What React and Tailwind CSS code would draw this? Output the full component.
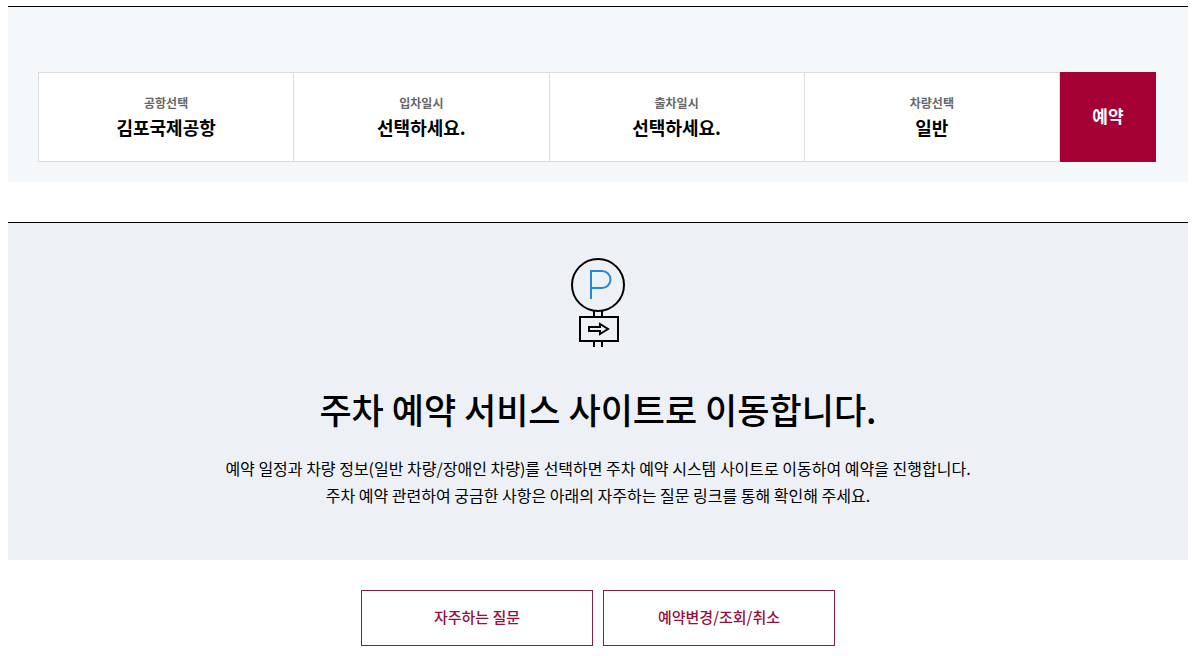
const fields = [
  { label: '공항선택', value: '김포국제공항' },
  { label: '입차일시', value: '선택하세요.' },
  { label: '출차일시', value: '선택하세요.' },
  { label: '차량선택', value: '일반' },
];

function ParkingSign() {
  return (
    <svg className="h-[92px] w-14" viewBox="0 0 56 92" fill="none" strokeWidth="2" aria-hidden="true">
      <circle cx="28" cy="29" r="26" stroke="#000" />
      <path d="M21 43V15h11a8.5 8.5 0 0 1 0 17H21" stroke="#2389d6" />
      <path d="M24 55v6M32 55v6M24 85v6M32 85v6" stroke="#000" />
      <rect x="10" y="61" width="38" height="24" stroke="#000" />
      <path d="M19 71h11v-3l8 5-8 5v-3H19z" stroke="#000" />
    </svg>
  );
}

export default function App() {
  return (
    <main className="pt-1.5 pr-1.5 pl-2 font-['Noto_Sans_CJK_KR','Noto_Sans',sans-serif] text-black">
      <section className="border-t border-black bg-[#f4f8fb] pt-[65px] pr-8 pb-5 pl-[30px]">
        <form className="flex h-[90px]" onSubmit={(e) => e.preventDefault()}>
          <div className="grid flex-1 grid-cols-4 border-l border-[#ddd]">
            {fields.map((f) => (
              <button key={f.label} type="button" className="flex flex-col items-center justify-center border-y border-r border-[#ddd] bg-white">
                <span className="text-xs leading-5 font-bold text-[#666]">{f.label}</span>
                <strong className="text-lg leading-7 font-bold">{f.value}</strong>
              </button>
            ))}
          </div>
          <button type="submit" className="w-24 bg-[#a50034] pb-0.5 text-[17px] font-bold text-white">예약</button>
        </form>
      </section>
      <section className="mt-10 flex flex-col items-center border-t border-black bg-[#edf1f6] pt-[33px] pb-[51px] text-center">
        <ParkingSign />
        <h1 className="mt-[34px] text-[35px] leading-[54px] font-medium">주차 예약 서비스 사이트로 이동합니다.</h1>
        <p className="mt-[19px] text-base leading-[27px]">
          예약 일정과 차량 정보(일반 차량/장애인 차량)를 선택하면 주차 예약 시스템 사이트로 이동하여 예약을 진행합니다.
          <br />
          주차 예약 관련하여 궁금한 사항은 아래의 자주하는 질문 링크를 통해 확인해 주세요.
        </p>
      </section>
      <nav className="flex justify-center gap-2.5 pt-[30px] pb-2.5 text-[15px] font-medium text-[#94103e]">
        <a href="#faq" className="flex h-14 w-58 items-center justify-center border border-[#8b1c48] pb-0.5">자주하는 질문</a>
        <a href="#reservation" className="flex h-14 w-58 items-center justify-center border border-[#8b1c48] pb-0.5">예약변경/조회/취소</a>
      </nav>
    </main>
  );
}
